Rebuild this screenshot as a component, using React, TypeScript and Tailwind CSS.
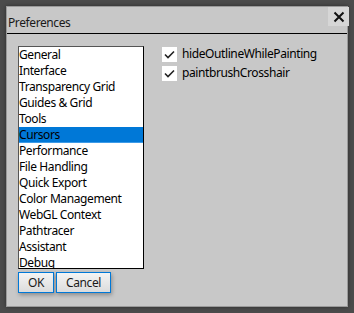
import React from "react";

const items = [
  "General",
  "Interface",
  "Transparency Grid",
  "Guides & Grid",
  "Tools",
  "Cursors",
  "Performance",
  "File Handling",
  "Quick Export",
  "Color Management",
  "WebGL Context",
  "Pathtracer",
  "Assistant",
  "Debug",
];

function Check() {
  return (
    <div className="w-[15px] h-[15px] bg-white flex items-center justify-center shrink-0">
      <svg width="11" height="9" viewBox="0 0 11 9">
        <path d="M1 4.5 L4 7.5 L10 1.5" fill="none" stroke="#222" strokeWidth="1.6" />
      </svg>
    </div>
  );
}

export default function App() {
  return (
    <div
      className="w-[354px] h-[313px] bg-[#4b4b4b] pt-[6px] pl-[6px] pr-[6px] pb-[6px] text-[12px] tracking-[-0.4px] text-black"
      style={{ fontFamily: '"Noto Sans", "Open Sans", sans-serif' }}
    >
      <div className="w-full h-full bg-[#c8c8c8] border border-[#9a9a9a] flex flex-col shadow-[0_0_4px_rgba(0,0,0,0.4)]">
        <div className="h-[27px] flex items-start justify-between border-b border-black">
          <div className="pl-[1px] pt-[8px] leading-[16px] text-[#1a1a1a]">Preferences</div>
          <div className="w-[21px] h-[19px] bg-[#d6d6d6] flex items-center justify-center -mr-[2px]">
            <svg width="12" height="12" viewBox="0 0 12 12">
              <path d="M1.5 1.5 L10.5 10.5 M10.5 1.5 L1.5 10.5" stroke="#111" strokeWidth="2" />
            </svg>
          </div>
        </div>
        <div className="flex pl-[11px] pt-[12px]">
          <div className="flex flex-col">
            <div className="w-[126px] h-[223px] bg-white border border-t-[#555] border-l-[#555] border-r-black border-b-black overflow-hidden">
              {items.map((it) => (
                <div
                  key={it}
                  className={
                    "h-[16px] leading-[16px] whitespace-nowrap " +
                    (it === "Cursors" ? "bg-[#0078d7] border-b border-[#3d9be8] leading-[15px]" : "")
                  }
                >
                  {it}
                </div>
              ))}
            </div>
            <div className="flex gap-[2px] mt-[3px]">
              <button className="w-[36px] h-[21px] border border-[#0078d7] bg-gradient-to-b from-[#f4f4f4] to-[#dcdcdc] shadow-[1px_2px_4px_rgba(0,0,0,0.3)] leading-[18px] text-[#1a1a1a]">
                OK
              </button>
              <button className="w-[55px] h-[21px] border border-[#0078d7] bg-gradient-to-b from-[#f4f4f4] to-[#dcdcdc] shadow-[1px_2px_4px_rgba(0,0,0,0.3)] leading-[18px] text-[#1a1a1a]">
                Cancel
              </button>
            </div>
          </div>
          <div className="flex flex-col gap-[3px] ml-[18px]">
            <div className="flex items-center gap-[5px] h-[16px]">
              <Check />
              <span className="leading-[16px]">hideOutlineWhilePainting</span>
            </div>
            <div className="flex items-center gap-[5px] h-[16px]">
              <Check />
              <span className="leading-[16px]">paintbrushCrosshair</span>
            </div>
          </div>
        </div>
      </div>
    </div>
  );
}
